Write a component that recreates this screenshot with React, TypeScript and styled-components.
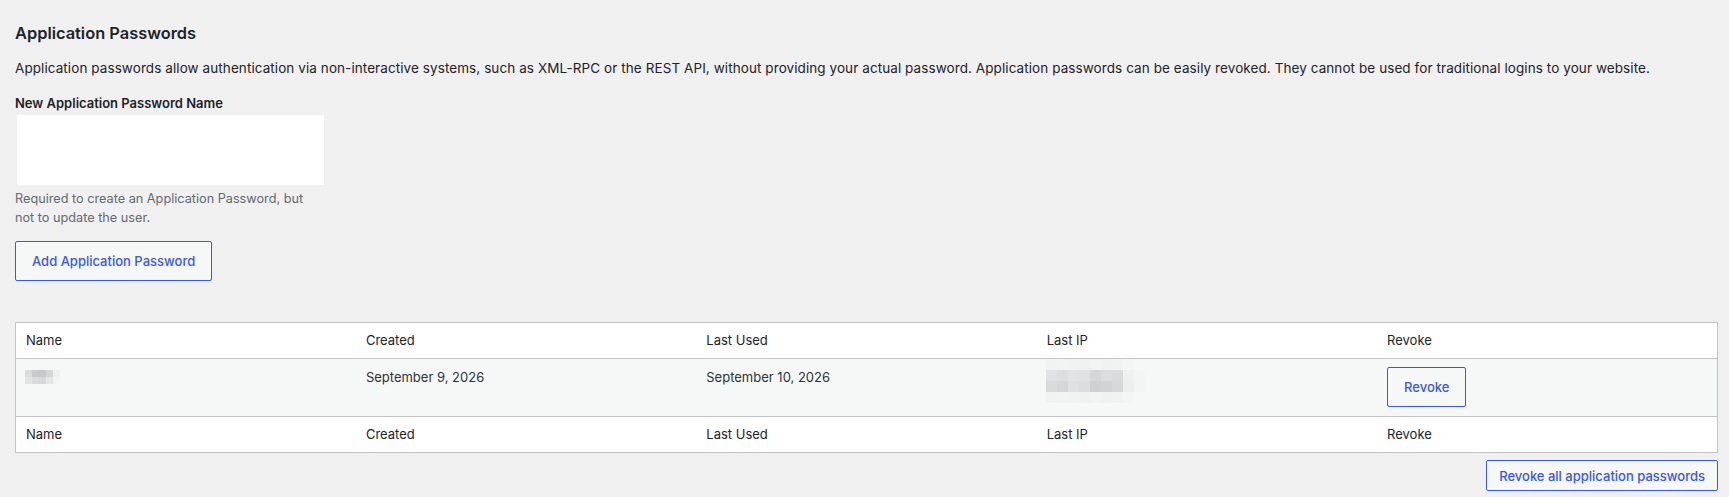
import styled, { createGlobalStyle } from 'styled-components'

const GlobalStyle = createGlobalStyle`
  html, body {
    margin: 0;
    padding: 0;
    background: #f0f0f1;
  }
  body {
    font-family: Inter, "Liberation Sans", sans-serif;
    font-size: 13px;
    line-height: 1.4;
    color: #1d2327;
  }
`

const Page = styled.main`
  padding: 0 11px 0 15px;
`

const Title = styled.h2`
  font-size: 16.4px;
  font-weight: 600;
  line-height: 1.3;
  margin: 0;
  padding-top: 23px;
  color: #1d2327;
`

const Intro = styled.p`
  margin: 15px 0 0;
  font-size: 13.5px;
  line-height: 1.45;
  letter-spacing: 0.08px;
`

const Field = styled.div`
  display: flex;
  flex-direction: column;
  margin-top: 15px;
  width: 310px;
`

const Label = styled.label`
  font-size: 13px;
  font-weight: 600;
  line-height: 1.5;
`

const TextInput = styled.input`
  box-sizing: border-box;
  width: 307px;
  height: 70px;
  margin: 2px 0 0 2px;
  border: none;
  background: #fff;
  font: inherit;
`

const Description = styled.p`
  margin: 4px 0 0;
  color: #646970;
  font-size: 12.7px;
  line-height: 19px;
`

const Button = styled.button<{ $small?: boolean }>`
  box-sizing: border-box;
  height: ${p => (p.$small ? '31px' : '40px')};
  padding: ${p => (p.$small ? '0 12px' : '0 16px')};
  border: 1px solid #3858e9;
  border-radius: 2px;
  background: #f6f7f7;
  color: #3858e9;
  font-family: inherit;
  font-size: 13px;
  font-weight: 500;
  white-space: nowrap;
  cursor: pointer;
`

const AddRow = styled.div`
  margin-top: 14px;
`

const Table = styled.table`
  width: 100%;
  margin-top: 41px;
  border-collapse: collapse;
  border: 1px solid #c3c4c7;
  table-layout: fixed;
  background: #fff;
`

const HeadCell = styled.th`
  text-align: left;
  font-weight: 400;
  padding: 8px 10px;
  line-height: 19px;
  color: #1d2327;
`

const BodyRow = styled.tr`
  background: #f6f7f7;
  border-top: 1px solid #c3c4c7;
  border-bottom: 1px solid #c3c4c7;
`

const Cell = styled.td`
  vertical-align: top;
  padding: 8px 10px 9px;
  line-height: 19px;
  color: #2c3338;
`

const DateText = styled.div`
  padding-top: 1px;
`

const MosaicWrap = styled.div<{ $offset: number }>`
  margin-top: ${p => p.$offset}px;
  margin-left: -1px;
`

const Footer = styled.div`
  display: flex;
  justify-content: flex-end;
  margin-top: 7px;
`

const Mosaic = ({ cols, rows, cell, shades }: { cols: number; rows: number; cell: number; shades: string[] }) => (
  <svg width={cols * cell} height={rows * cell} style={{ display: 'block' }}>
    {Array.from({ length: rows * cols }).map((_, i) => (
      <rect
        key={i}
        x={(i % cols) * cell}
        y={Math.floor(i / cols) * cell}
        width={cell}
        height={cell}
        fill={shades[i % shades.length]}
      />
    ))}
  </svg>
)

const nameShades = [
  '#dadbdc', '#c9cacc', '#c6c7c9', '#d4d5d7', '#eef0f0',
  '#e2e3e4', '#dadbdc', '#d6d7d9', '#e4e5e6', '#f2f3f3',
]

const ipShades = [
  '#f1f2f2', '#f2f3f3', '#f1f2f2', '#f0f1f1', '#f2f3f3', '#f0f1f1', '#f1f2f2', '#f4f5f5', '#f6f7f7', '#f6f7f7',
  '#e0e1e2', '#dcdddf', '#e2e3e4', '#e0e1e2', '#d6d7d9', '#dcdddf', '#d9dadc', '#eff0f0', '#f3f4f4', '#f6f7f7',
  '#d9dadc', '#d5d6d8', '#dfe0e1', '#dcdddf', '#cfd0d3', '#d2d3d5', '#d7d8da', '#edeeee', '#f3f4f4', '#f6f7f7',
  '#f1f2f2', '#f2f3f3', '#f1f2f2', '#f0f1f1', '#f2f3f3', '#f0f1f1', '#f1f2f2', '#f4f5f5', '#f6f7f7', '#f6f7f7',
]

const columns = ['Name', 'Created', 'Last Used', 'Last IP', 'Revoke']

export default function App() {
  return (
    <>
      <GlobalStyle />
      <Page>
        <Title>Application Passwords</Title>
        <Intro>
          Application passwords allow authentication via non-interactive systems, such as XML-RPC or the REST API, without providing your actual password. Application passwords can be easily revoked. They cannot be used for traditional logins to your website.
        </Intro>
        <Field>
          <Label htmlFor="new_application_password_name">New Application Password Name</Label>
          <TextInput id="new_application_password_name" type="text" />
          <Description>Required to create an Application Password, but not to update the user.</Description>
        </Field>
        <AddRow>
          <Button type="button">Add Application Password</Button>
        </AddRow>
        <Table>
          <thead>
            <tr>
              {columns.map(c => <HeadCell key={c}>{c}</HeadCell>)}
            </tr>
          </thead>
          <tbody>
            <BodyRow>
              <Cell>
                <MosaicWrap $offset={3}>
                  <Mosaic cols={5} rows={2} cell={7} shades={nameShades} />
                </MosaicWrap>
              </Cell>
              <Cell><DateText>September 9, 2026</DateText></Cell>
              <Cell><DateText>September 10, 2026</DateText></Cell>
              <Cell>
                <MosaicWrap $offset={-8}>
                  <Mosaic cols={10} rows={4} cell={11} shades={ipShades} />
                </MosaicWrap>
              </Cell>
              <Cell>
                <Button type="button">Revoke</Button>
              </Cell>
            </BodyRow>
          </tbody>
          <tfoot>
            <tr>
              {columns.map(c => <HeadCell key={c}>{c}</HeadCell>)}
            </tr>
          </tfoot>
        </Table>
        <Footer>
          <Button type="button" $small>Revoke all application passwords</Button>
        </Footer>
      </Page>
    </>
  )
}
